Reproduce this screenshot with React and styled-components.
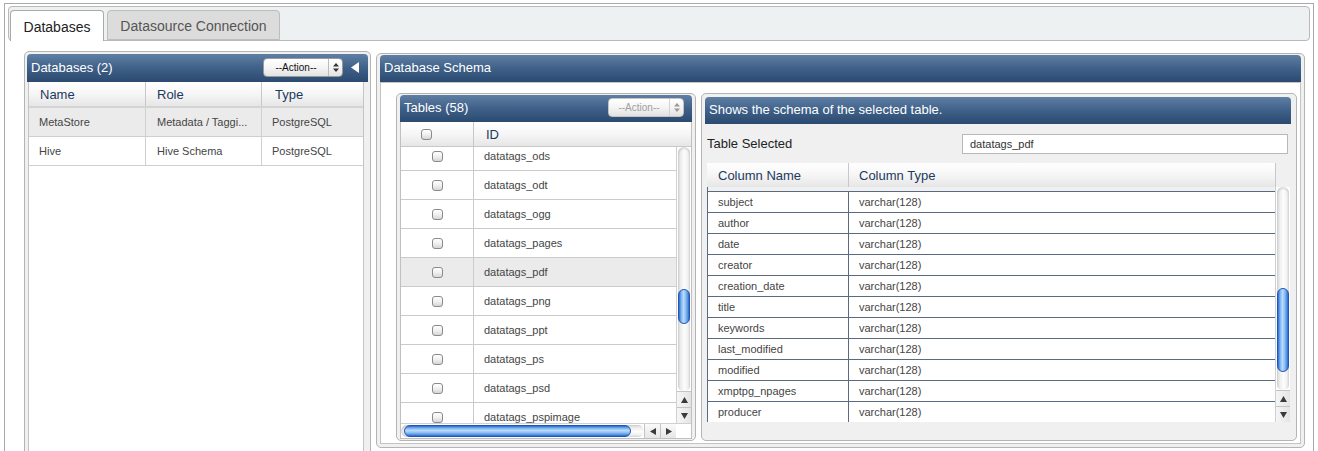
import React from 'react';
import styled, { createGlobalStyle } from 'styled-components';

const FONT = '"Liberation Sans", Arial, Helvetica, sans-serif';

const Global = createGlobalStyle`
  html, body { margin: 0; padding: 0; background: #fff; }
  body { font-family: ${FONT}; overflow: hidden; height: 451px; }
  * { box-sizing: border-box; }
`;

const Frame = styled.div`
  margin: 3px 0 0 4px;
  width: 1310px;
  height: 460px;
  border: 1px solid #a9a9a9;
  border-bottom: none;
  padding: 2px 3px 0 3px;
  background: #fff;
`;

const TabBar = styled.div`
  height: 35px;
  border: 1px solid #b9b9b9;
  border-radius: 4px;
  background: #edf1f1;
  display: flex;
  align-items: flex-end;
  padding-left: 1px;
  gap: 3px;
`;

const Tab = styled.div`
  width: ${p => p.$w}px;
  height: ${p => (p.$active ? 31 : 30)}px;
  margin-bottom: ${p => (p.$active ? -1 : 0)}px;
  display: flex;
  align-items: center;
  justify-content: center;
  padding-top: 1px;
  border: 1px solid ${p => (p.$active ? '#a9a9a9' : '#bdbdbd')};
  border-bottom: ${p => (p.$active ? 'none' : '1px solid #bdbdbd')};
  border-radius: 4px 4px 0 0;
  background: ${p => (p.$active ? '#fff' : '#dcdcdc')};
  color: ${p => (p.$active ? '#222' : '#555')};
  font-size: 14px;
`;

const Content = styled.div`
  display: flex;
  align-items: flex-start;
  gap: 5px;
  padding: 10px 5px 0 16px;
`;

const PanelFrame = styled.div`
  width: ${p => p.$w}px;
  height: ${p => p.$h}px;
  margin-top: ${p => p.$mt || 0}px;
  border: 1px solid #b4b4b4;
  border-radius: 5px;
  background: #f0f0f0;
  padding: ${p => p.$pad};
  display: flex;
  flex-direction: column;
  flex-shrink: 0;
`;

const PanelHeader = styled.div`
  height: ${p => p.$h}px;
  flex-shrink: 0;
  display: flex;
  align-items: center;
  padding: 0 4px 2px 4px;
  border-radius: 4px 4px 0 0;
  background: linear-gradient(#5f7fa4, #3f6088 50%, #2a4a70);
  color: #fff;
  font-size: 13px;
  white-space: nowrap;
`;

const HeaderTitle = styled.span`
  flex: 1;
`;

const SelectBox = styled.div`
  width: ${p => p.$w}px;
  height: 19px;
  margin-right: ${p => p.$mr || 0}px;
  display: flex;
  border: 1px solid ${p => (p.$disabled ? '#c4c4c4' : '#9a9a9a')};
  border-radius: 4px;
  background: linear-gradient(#ffffff, #f4f4f4 50%, #e2e2e2);
  color: ${p => (p.$disabled ? '#a0a0a0' : '#111')};
  font-size: 10px;
`;

const SelectLabel = styled.div`
  flex: 1;
  display: flex;
  align-items: center;
  justify-content: center;
`;

const SelectArrow = styled.div`
  width: 14px;
  display: flex;
  align-items: center;
  justify-content: center;
  border-left: 1px solid ${p => (p.$disabled ? '#d4d4d4' : '#bbb')};
`;

const Collapse = styled.div`
  margin: 0 5px 0 8px;
  display: flex;
  align-items: center;
`;

function ActionSelect({ w, mr, disabled }) {
  const c = disabled ? '#9a9a9a' : '#333';
  return (
    <SelectBox $w={w} $mr={mr} $disabled={disabled}>
      <SelectLabel>--Action--</SelectLabel>
      <SelectArrow $disabled={disabled}>
        <svg width="6" height="9" viewBox="0 0 6 9">
          <polygon points="3,0 6,3.5 0,3.5" fill={c} />
          <polygon points="0,5.5 6,5.5 3,9" fill={c} />
        </svg>
      </SelectArrow>
    </SelectBox>
  );
}

/* ---------- left databases grid ---------- */

const LeftBody = styled.div`
  flex: 1;
  margin: 0 4px 0 1px;
  background: #fff;
  border-left: 1px solid #c4c4c4;
  border-right: 1px solid #c4c4c4;
`;

const GridHeadRow = styled.div`
  display: flex;
  height: ${p => p.$h}px;
  flex-shrink: 0;
  background: linear-gradient(#ffffff, #f6f6f6 50%, #e6e6e6);
  border-bottom: ${p => p.$bb || '1px solid #c8c8c8'};
`;

const HeadCell = styled.div`
  width: ${p => (p.$w ? `${p.$w}px` : 'auto')};
  flex: ${p => (p.$w ? '0 0 auto' : '1')};
  display: flex;
  align-items: center;
  padding-left: ${p => p.$pl || 11}px;
  border-right: ${p => (p.$nb ? 'none' : '1px solid #c8c8c8')};
  color: #1c3a5e;
  font-size: 13px;
`;

const Row = styled.div`
  display: flex;
  height: ${p => p.$h}px;
  flex-shrink: 0;
  background: ${p => (p.$sel ? '#ebebeb' : '#fff')};
  border-bottom: ${p => p.$bb || 'none'};
  border-top: ${p => p.$bt || 'none'};
`;

const Cell = styled.div`
  width: ${p => (p.$w ? `${p.$w}px` : 'auto')};
  flex: ${p => (p.$w ? '0 0 auto' : '1')};
  display: flex;
  align-items: center;
  justify-content: ${p => (p.$center ? 'center' : 'flex-start')};
  padding-left: ${p => (p.$center ? 0 : p.$pl ?? 10)}px;
  border-right: ${p => (p.$br ? p.$br : 'none')};
  color: #454545;
  font-size: 11px;
  white-space: nowrap;
  overflow: hidden;
`;

/* ---------- checkbox ---------- */

const Check = styled.span`
  display: inline-block;
  width: 11px;
  height: 11px;
  border: 1px solid #8a8a8a;
  border-radius: 3px;
  background: linear-gradient(#ffffff, #f0f0f0 50%, #d6d6d6);
`;

/* ---------- scrollbars ---------- */

const VBar = styled.div`
  width: 15px;
  flex-shrink: 0;
  display: flex;
  flex-direction: column;
  background: #fff;
  border-left: 1px solid #d0d0d0;
`;

const VGroove = styled.div`
  flex: 1;
  margin: 0 1px;
  border-radius: 7px 7px 6px 6px;
  background: linear-gradient(to right, #d4d4d4, #efefef 25%, #fdfdfd 55%, #f2f2f2 80%, #dadada);
  box-shadow: inset 0 2px 2px rgba(0, 0, 0, 0.12);
  overflow: hidden;
`;

const VThumb = styled.div`
  height: ${p => p.$h}px;
  margin-top: ${p => p.$top}px;
  border: 1px solid #1f55b8;
  border-radius: 6px;
  background: linear-gradient(to right, #2f68cc, #7db4ee 22%, #b9dafc 45%, #8ec2f4 65%, #4d8ae0 90%, #2d63c6);
`;

const Arrows = styled.div`
  display: flex;
  flex-direction: ${p => (p.$row ? 'row' : 'column')};
  flex-shrink: 0;
  background: linear-gradient(${p => (p.$row ? '#fafafa, #e6e6e6' : 'to right, #f6f6f6, #e4e4e4')});
`;

const ArrowBtn = styled.div`
  width: ${p => p.$w}px;
  height: ${p => p.$h}px;
  display: flex;
  align-items: center;
  justify-content: center;
  border-top: ${p => (p.$bt ? '1px solid #c4c4c4' : 'none')};
  border-left: ${p => (p.$bl ? '1px solid #c4c4c4' : 'none')};
`;

function Tri({ dir }) {
  const pts = {
    up: '3.5,0 7,6 0,6',
    down: '0,0 7,0 3.5,6',
    left: '0,3.5 6,0 6,7',
    right: '0,0 6,3.5 0,7',
  }[dir];
  const vertical = dir === 'up' || dir === 'down';
  return (
    <svg width={vertical ? 7 : 6} height={vertical ? 6 : 7} viewBox={vertical ? '0 0 7 6' : '0 0 6 7'}>
      <polygon points={pts} fill="#3a3a3a" />
    </svg>
  );
}

function VScroll({ top, h }) {
  return (
    <VBar>
      <VGroove>
        <VThumb $top={top} $h={h} />
      </VGroove>
      <Arrows>
        <ArrowBtn $w={14} $h={16} $bt><Tri dir="up" /></ArrowBtn>
        <ArrowBtn $w={14} $h={16} $bt><Tri dir="down" /></ArrowBtn>
      </Arrows>
    </VBar>
  );
}

const HBar = styled.div`
  height: 15px;
  flex-shrink: 0;
  display: flex;
  background: #fff;
  border-top: 1px solid #d0d0d0;
`;

const HGroove = styled.div`
  flex: 1;
  margin: 1px 0;
  display: flex;
  align-items: stretch;
  border-radius: 7px;
  background: linear-gradient(#d4d4d4, #efefef 25%, #fdfdfd 55%, #f2f2f2 80%, #dadada);
  box-shadow: inset 2px 0 2px rgba(0, 0, 0, 0.12);
`;

const HThumb = styled.div`
  width: ${p => p.$w}px;
  margin-left: ${p => p.$left}px;
  border: 1px solid #1f55b8;
  border-radius: 7px;
  background: linear-gradient(#2f68cc, #7db4ee 22%, #b9dafc 45%, #8ec2f4 65%, #4d8ae0 90%, #2d63c6);
`;

const Corner = styled.div`
  width: 15px;
  background: #fff;
`;

function HScroll({ left, w }) {
  return (
    <HBar>
      <HGroove>
        <HThumb $left={left} $w={w} />
      </HGroove>
      <Arrows $row>
        <ArrowBtn $w={16} $h={14} $bl><Tri dir="left" /></ArrowBtn>
        <ArrowBtn $w={16} $h={14} $bl><Tri dir="right" /></ArrowBtn>
      </Arrows>
      <Corner />
    </HBar>
  );
}

/* ---------- database schema ---------- */

const SchemaBody = styled.div`
  flex: 1;
  display: flex;
  gap: 5px;
  padding: 10px 3px 2px 15px;
  background: #fff;
  border: 1px solid #c4c4c4;
`;

const TablesGrid = styled.div`
  flex: 1;
  display: flex;
  flex-direction: column;
  background: #fff;
  border-left: 1px solid #c0c0c0;
  border-right: 1px solid #c0c0c0;
  border-bottom: 1px solid #c0c0c0;
  min-height: 0;
`;

const ScrollArea = styled.div`
  flex: 1;
  display: flex;
  min-height: 0;
  overflow: hidden;
`;

const RowsViewport = styled.div`
  flex: 1;
  overflow: hidden;
  display: flex;
  flex-direction: column;
  padding-top: ${p => p.$pt || 0}px;
  border-left: ${p => p.$bl || 'none'};
`;

const RowsList = styled.div`
  display: flex;
  flex-direction: column;
  margin-top: ${p => p.$offset || 0}px;
`;

const SelectedLine = styled.div`
  height: 20px;
  margin-top: 10px;
  display: flex;
  align-items: center;
  justify-content: space-between;
  padding-left: 2px;
  margin-right: 3px;
  flex-shrink: 0;
`;

const Label = styled.span`
  font-size: 13px;
  color: #222;
  margin-top: -1px;
`;

const TextInput = styled.div`
  width: 326px;
  height: 20px;
  display: flex;
  align-items: center;
  padding-left: 7px;
  background: #fff;
  border: 1px solid #b8b8b8;
  font-size: 11px;
  color: #333;
`;

const ColumnsGrid = styled.div`
  height: 259px;
  margin: 9px 1px 0 2px;
  display: flex;
  flex-direction: column;
  flex-shrink: 0;
`;

const HeaderCorner = styled.div`
  width: 14px;
  background: #f0f0f0;
`;

const DARK = '1px solid #5a6a80';

const databases = [
  { name: 'MetaStore', role: 'Metadata / Taggi...', type: 'PostgreSQL', sel: true },
  { name: 'Hive', role: 'Hive Schema', type: 'PostgreSQL' },
];

const tables = [
  'datatags_ods', 'datatags_odt', 'datatags_ogg', 'datatags_pages', 'datatags_pdf',
  'datatags_png', 'datatags_ppt', 'datatags_ps', 'datatags_psd', 'datatags_pspimage',
];

const columns = [
  'subject', 'author', 'date', 'creator', 'creation_date', 'title', 'keywords',
  'last_modified', 'modified', 'xmptpg_npages', 'producer',
];

export default function App() {
  return (
    <>
      <Global />
      <Frame>
        <TabBar>
          <Tab $active $w={94}>Databases</Tab>
          <Tab $w={173}>Datasource Connection</Tab>
        </TabBar>
        <Content>
          <PanelFrame $w={347} $h={420} $pad="2px">
            <PanelHeader $h={28}>
              <HeaderTitle>Databases (2)</HeaderTitle>
              <ActionSelect w={80} />
              <Collapse>
                <svg width="8" height="11" viewBox="0 0 8 11">
                  <polygon points="8,0 8,11 0,5.5" fill="#fff" />
                </svg>
              </Collapse>
            </PanelHeader>
            <LeftBody>
              <GridHeadRow $h={26} $bb="2px solid #d4d4d4">
                <HeadCell $w={117}>Name</HeadCell>
                <HeadCell $w={116}>Role</HeadCell>
                <HeadCell $nb $pl={13}>Type</HeadCell>
              </GridHeadRow>
              {databases.map(d => (
                <Row key={d.name} $h={29} $sel={d.sel} $bb="1px solid #cfcfcf">
                  <Cell $w={117} $br="1px solid #d0d0d0">{d.name}</Cell>
                  <Cell $w={116} $br="1px solid #d0d0d0" $pl={11}>{d.role}</Cell>
                  <Cell>{d.type}</Cell>
                </Row>
              ))}
            </LeftBody>
          </PanelFrame>

          <PanelFrame $w={929} $h={395} $mt={2} $pad="1px 3px 3px 3px">
            <PanelHeader $h={27}>
              <HeaderTitle>Database Schema</HeaderTitle>
            </PanelHeader>
            <SchemaBody>
              <PanelFrame $w={300} $h={348} $pad="1px 3px 1px 3px">
                <PanelHeader $h={27}>
                  <HeaderTitle>Tables (58)</HeaderTitle>
                  <ActionSelect w={76} mr={4} disabled />
                </PanelHeader>
                <TablesGrid>
                  <GridHeadRow $h={25}>
                    <HeadCell $w={73} $pl={20}><Check /></HeadCell>
                    <HeadCell $nb $pl={12}>ID</HeadCell>
                  </GridHeadRow>
                  <ScrollArea>
                    <RowsViewport>
                      <RowsList $offset={-5}>
                        {tables.map(t => (
                          <Row key={t} $h={29} $sel={t === 'datatags_pdf'} $bb="1px solid #cbcbcb">
                            <Cell $w={73} $center $br="1px solid #cbcbcb"><Check /></Cell>
                            <Cell>{t}</Cell>
                          </Row>
                        ))}
                      </RowsList>
                    </RowsViewport>
                    <VScroll top={142} h={35} />
                  </ScrollArea>
                  <HScroll left={3} w={227} />
                </TablesGrid>
              </PanelFrame>

              <PanelFrame $w={596} $h={348} $pad="3px 5px 0 3px">
                <PanelHeader $h={27}>
                  <HeaderTitle>Shows the schema of the selected table.</HeaderTitle>
                </PanelHeader>
                <SelectedLine>
                  <Label>Table Selected</Label>
                  <TextInput>datatags_pdf</TextInput>
                </SelectedLine>
                <ColumnsGrid>
                  <GridHeadRow $h={24} $bb="none">
                    <HeadCell $w={142} $pl={11}>Column Name</HeadCell>
                    <HeadCell $w={427} $pl={10}>Column Type</HeadCell>
                    <HeaderCorner />
                  </GridHeadRow>
                  <ScrollArea>
                    <RowsViewport $pt={4} $bl={DARK}>
                      {columns.map(c => (
                        <Row key={c} $h={21} $bt={DARK}>
                          <Cell $w={141} $br={DARK}>{c}</Cell>
                          <Cell>varchar(128)</Cell>
                        </Row>
                      ))}
                    </RowsViewport>
                    <VScroll top={101} h={84} />
                  </ScrollArea>
                </ColumnsGrid>
              </PanelFrame>
            </SchemaBody>
          </PanelFrame>
        </Content>
      </Frame>
    </>
  );
}
